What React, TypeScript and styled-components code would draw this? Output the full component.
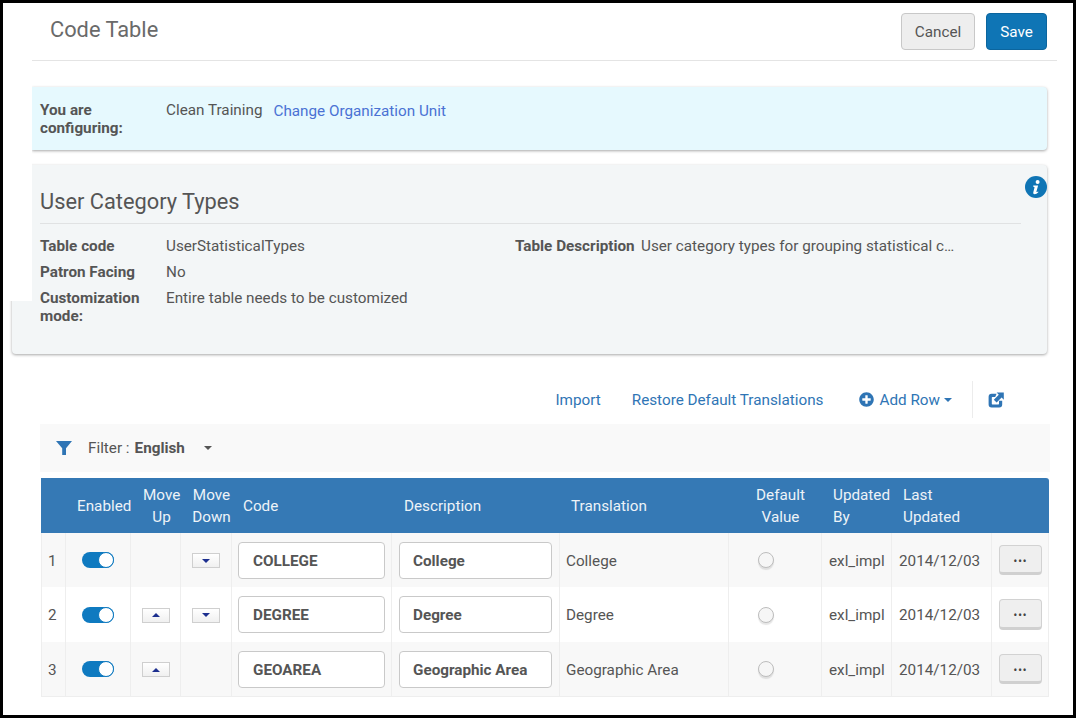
import { createGlobalStyle } from "styled-components";
import styled from "styled-components";
import { FaPlusCircle } from "react-icons/fa";

const GlobalStyle = createGlobalStyle`
  html, body {
    margin: 0;
    padding: 0;
    background: #fff;
    font-family: Roboto, "Liberation Sans", sans-serif;
    font-size: 15.25px;
    color: #555;
  }
`;

interface RowData {
  num: number;
  code: string;
  description: string;
  up: boolean;
  down: boolean;
  height: number;
}

const rows: RowData[] = [
  { num: 1, code: "COLLEGE", description: "College", up: false, down: true, height: 54 },
  { num: 2, code: "DEGREE", description: "Degree", up: true, down: true, height: 55 },
  { num: 3, code: "GEOAREA", description: "Geographic Area", up: true, down: false, height: 54 },
];

const App = () => (
  <Frame>
    <GlobalStyle />
    <Header>
      <Title>Code Table</Title>
      <HeaderActions>
        <CancelButton>Cancel</CancelButton>
        <SaveButton>Save</SaveButton>
      </HeaderActions>
    </Header>

    <ConfigBand>
      <BoldLabel>You are configuring:</BoldLabel>
      <span>Clean Training</span>
      <ChangeLink>Change Organization Unit</ChangeLink>
    </ConfigBand>

    <Panel>
      <InfoIcon viewBox="0 0 22 22">
        <circle cx="11" cy="11" r="11" fill="#0f75b5" />
        <circle cx="12.6" cy="6" r="2" fill="#fff" />
        <path d="M8.2 9.4h4.9l-1.7 6.3c-.1.5.4.6 1.6-.3l.5.7c-1.5 1.6-2.7 2.1-3.8 2.1-1.2 0-1.7-.7-1.4-1.9l1.2-4.8c.1-.4-.3-.6-1-.6z" fill="#fff" />
      </InfoIcon>
      <PanelTitle>User Category Types</PanelTitle>
      <DetailsGrid>
        <BoldLabel>Table code</BoldLabel>
        <span>UserStatisticalTypes</span>
        <DescriptionLine>
          <DescriptionLabel>Table Description</DescriptionLabel>
          <DescriptionValue>User category types for grouping statistical c…</DescriptionValue>
        </DescriptionLine>
        <BoldLabel>Patron Facing</BoldLabel>
        <WideValue>No</WideValue>
        <BoldLabel>Customization mode:</BoldLabel>
        <WideValue>Entire table needs to be customized</WideValue>
      </DetailsGrid>
    </Panel>

    <Toolbar>
      <ToolLink>Import</ToolLink>
      <ToolLink>Restore Default Translations</ToolLink>
      <AddRow>
        <FaPlusCircle size={15} />
        <span>Add Row</span>
        <LinkCaret />
      </AddRow>
      <ToolDivider />
      <ExportIcon viewBox="0 0 16 16">
        <path d="M8.6 1.8H3.6A3 3 0 0 0 .6 4.8v7.8a3 3 0 0 0 3 3h7.6a3 3 0 0 0 3-3V8.8h-3.2v3a.6.6 0 0 1-.6.6H4.4a.6.6 0 0 1-.6-.6V5.6a.6.6 0 0 1 .6-.6h2.8z" fill="#2f75b5" />
        <path d="M8.6.6H15.8V7.8L13.6 5.6 8.6 10.6 5.8 7.8 10.8 2.8z" fill="#2f75b5" />
      </ExportIcon>
    </Toolbar>

    <FilterBar>
      <FilterIcon viewBox="0 0 16 14">
        <path d="M0 0H16L10 7.2V14H6.2V7.2z" fill="#2f75b5" />
      </FilterIcon>
      <span>Filter :</span>
      <FilterValue>English</FilterValue>
      <GreyCaret />
    </FilterBar>

    <DataTable>
      <colgroup>
        {[24, 65, 50, 51, 160, 168, 169, 93, 70, 100, 58].map((w, i) => (
          <col key={i} style={{ width: w }} />
        ))}
      </colgroup>
      <thead>
        <tr>
          <HeadCell />
          <HeadCell $center>Enabled</HeadCell>
          <HeadCell $center $pad={13}>Move Up</HeadCell>
          <HeadCell $center>Move Down</HeadCell>
          <HeadCell>Code</HeadCell>
          <HeadCell $pad={13}>Description</HeadCell>
          <HeadCell>Translation</HeadCell>
          <HeadCell $center>Default Value</HeadCell>
          <HeadCell>Updated By</HeadCell>
          <HeadCell>
            Last
            <br />
            Updated
          </HeadCell>
          <HeadCell />
        </tr>
      </thead>
      <tbody>
        {rows.map((row) => (
          <Row key={row.num} $height={row.height} $odd={row.num % 2 === 1}>
            <TextCell $pad={6}>{row.num}</TextCell>
            <Cell $center>
              <Toggle />
            </Cell>
            <Cell $center>{row.up && <MoveButton><ArrowUp /></MoveButton>}</Cell>
            <Cell $center>{row.down && <MoveButton><ArrowDown /></MoveButton>}</Cell>
            <Cell $pad={6}>
              <TextField $width={147} $inset={14} value={row.code} readOnly />
            </Cell>
            <Cell>
              <TextField $width={153} $inset={13} value={row.description} readOnly />
            </Cell>
            <TextCell $pad={6}>{row.description}</TextCell>
            <Cell>
              <Radio />
            </Cell>
            <TextCell>exl_impl</TextCell>
            <TextCell>2014/12/03</TextCell>
            <Cell>
              <DotsButton $height={row.height - 24}>•••</DotsButton>
            </Cell>
          </Row>
        ))}
      </tbody>
    </DataTable>
  </Frame>
);
export default App;

const Frame = styled.div`
  box-sizing: border-box;
  width: 1076px;
  height: 718px;
  border: 3px solid #000;
  overflow: hidden;
  background: #fff;
`;

const Header = styled.header`
  display: flex;
  align-items: flex-start;
  justify-content: space-between;
  box-sizing: border-box;
  height: 58px;
  margin: 0 16px 0 29px;
  padding: 10px 10px 0 18px;
  border-bottom: 1px solid #e4e4e4;
`;

const Title = styled.h1`
  margin: 4px 0 0;
  font-size: 21.8px;
  font-weight: 400;
  line-height: 26px;
  color: #6a6a6a;
`;

const HeaderActions = styled.div`
  display: flex;
  gap: 11px;
`;

const CancelButton = styled.button`
  box-sizing: border-box;
  width: 74px;
  height: 37px;
  border: 1px solid #c8c8c8;
  border-radius: 4px;
  background: #eeeeee;
  color: #555;
  font: 400 15.25px Roboto, sans-serif;
  padding: 0;
`;

const SaveButton = styled(CancelButton)`
  width: 61px;
  border-color: #0b659e;
  background: #0f75b5;
  color: #fff;
`;

const ConfigBand = styled.section`
  display: flex;
  box-sizing: border-box;
  width: 1015px;
  height: 63px;
  margin: 26px 0 0 29px;
  padding: 14px 8px 0;
  background: #e6f9fe;
  border-radius: 0 4px 4px 0;
  box-shadow: 0 1px 3px rgba(0, 0, 0, 0.35);
  clip-path: inset(-6px -6px -6px 0);
  line-height: 18px;
`;

const BoldLabel = styled.div`
  width: 100px;
  margin-right: 26px;
  font-weight: 700;
`;

const ChangeLink = styled.a`
  margin: 1px 0 0 11px;
  color: #4a72d4;
`;

const Panel = styled.section`
  position: relative;
  box-sizing: border-box;
  width: 1035px;
  height: 189px;
  margin: 15px 0 0 9px;
  padding: 0 26px 0 28px;
  background: #f3f6f7;
  border-radius: 4px;
  box-shadow: 0 1px 3px rgba(0, 0, 0, 0.35);

  /* white block over the panel's upper left corner */
  &:before {
    content: "";
    position: absolute;
    left: -4px;
    top: -4px;
    width: 24px;
    height: 140px;
    background: #fff;
  }
`;

const InfoIcon = styled.svg`
  position: absolute;
  top: 11px;
  right: 0;
  width: 22px;
  height: 22px;
`;

const PanelTitle = styled.h2`
  margin: 0;
  padding-top: 23px;
  height: 35px;
  font-size: 21.8px;
  font-weight: 400;
  line-height: 28px;
  color: #555;
  border-bottom: 1px solid #e0e2e3;
`;

const DetailsGrid = styled.div`
  display: grid;
  grid-template-columns: 126px 349px 1fr;
  row-gap: 8px;
  padding-top: 13px;
  line-height: 18px;
`;

const DescriptionLine = styled.div`
  display: flex;
  min-width: 0;
`;

const DescriptionLabel = styled.span`
  width: 126px;
  flex: none;
  font-weight: 700;
`;

const DescriptionValue = styled.span`
  white-space: nowrap;
`;

const WideValue = styled.div`
  grid-column: 2 / 4;
`;

const Toolbar = styled.div`
  display: flex;
  align-items: center;
  justify-content: flex-end;
  height: 37px;
  margin-top: 27px;
  padding-right: 69px;
  color: #2f75b5;
`;

const ToolLink = styled.a`
  margin-right: 31px;
  color: #2f75b5;
`;

const AddRow = styled.a`
  display: flex;
  align-items: center;
  gap: 6px;
  margin-left: 4px;
  color: #2f75b5;
`;

const LinkCaret = styled.i`
  width: 0;
  height: 0;
  margin-left: -2px;
  border: 4px solid transparent;
  border-top-color: #2f75b5;
  border-bottom: 0;
`;

const ToolDivider = styled.div`
  width: 1px;
  height: 37px;
  margin: 0 15px 0 20px;
  background: #ececec;
`;

const ExportIcon = styled.svg`
  width: 16px;
  height: 16px;
`;

const FilterBar = styled.div`
  display: flex;
  align-items: center;
  box-sizing: border-box;
  width: 1010px;
  height: 48px;
  margin: 6px 0 0 37px;
  padding-left: 16px;
  background: #f9f9f9;
`;

const FilterIcon = styled.svg`
  width: 16px;
  height: 14px;
  margin-right: 16px;
`;

const FilterValue = styled.b`
  margin: 0 19px 0 5px;
`;

const GreyCaret = styled.i`
  width: 0;
  height: 0;
  border: 4px solid transparent;
  border-top-color: #555;
  border-bottom: 0;
`;

const DataTable = styled.table`
  table-layout: fixed;
  box-sizing: border-box;
  width: 1008px;
  margin: 6px 0 0 38px;
  border-collapse: separate;
  border-spacing: 0;
  border-bottom: 1px solid #eee;
`;

const HeadCell = styled.th<{ $center?: boolean; $pad?: number }>`
  height: 55px;
  padding: 0 0 0 ${({ $pad }) => $pad ?? 12}px;
  background: #3579b5;
  color: #edf3f8;
  font-size: 15.25px;
  font-weight: 400;
  line-height: 22px;
  text-align: ${({ $center }) => ($center ? "center" : "left")};
  &:last-child {
    border-top-right-radius: 3px;
  }
`;

const Row = styled.tr<{ $height: number; $odd: boolean }>`
  height: ${({ $height }) => $height}px;
  background: ${({ $odd }) => ($odd ? "#f8f8f8" : "#fff")};
`;

const Cell = styled.td<{ $center?: boolean; $pad?: number }>`
  padding: 0 0 0 ${({ $pad }) => $pad ?? 7}px;
  border-left: 1px solid #eee;
  text-align: ${({ $center }) => ($center ? "center" : "left")};
  &:last-child {
    border-right: 1px solid #eee;
  }
`;

const TextCell = styled(Cell)`
  padding-top: 1px;
`;

const Toggle = styled.span`
  display: flex;
  justify-content: flex-end;
  box-sizing: border-box;
  width: 32px;
  height: 16px;
  margin: 0 0 0 9px;
  border-radius: 8px;
  background: #0f7ac0;
  &:after {
    content: "";
    box-sizing: border-box;
    width: 16px;
    height: 16px;
    border: 1px solid #0f7ac0;
    border-radius: 50%;
    background: #fff;
  }
`;

const MoveButton = styled.button`
  display: inline-flex;
  align-items: center;
  justify-content: center;
  box-sizing: border-box;
  width: 28px;
  height: 15px;
  margin-right: 7px;
  padding: 0;
  border: 1px solid #cfcfcf;
  background: linear-gradient(#fff, #f0f0f0);
  vertical-align: middle;
`;

const ArrowUp = styled.i`
  width: 0;
  height: 0;
  border: 4px solid transparent;
  border-bottom-color: #1c2f8f;
  border-top: 0;
`;

const ArrowDown = styled.i`
  width: 0;
  height: 0;
  border: 4px solid transparent;
  border-top-color: #1c2f8f;
  border-bottom: 0;
`;

const TextField = styled.input<{ $width: number; $inset: number }>`
  box-sizing: border-box;
  display: block;
  width: ${({ $width }) => $width}px;
  height: 37px;
  padding: 1px 0 0 ${({ $inset }) => $inset}px;
  border: 1px solid #c9c9c9;
  border-radius: 4px;
  background: #fff;
  color: #555;
  font: 700 15.25px Roboto, sans-serif;
  outline: none;
`;

const Radio = styled.span`
  display: block;
  box-sizing: border-box;
  width: 16px;
  height: 16px;
  margin-left: 22px;
  border: 1px solid #bdbdbd;
  border-radius: 50%;
  background: #f6f6f6;
  box-shadow: 0 2px 1px rgba(0, 0, 0, 0.1);
`;

const DotsButton = styled.button<{ $height: number }>`
  display: block;
  box-sizing: border-box;
  width: 43px;
  height: ${({ $height }) => $height}px;
  padding: 4px 0 0;
  border: 1px solid #d2d2d2;
  border-bottom: 3px solid #d0d0d0;
  border-radius: 4px;
  background: #efefef;
  color: #444;
  font: 700 10px Roboto, sans-serif;
  letter-spacing: 1px;
`;
